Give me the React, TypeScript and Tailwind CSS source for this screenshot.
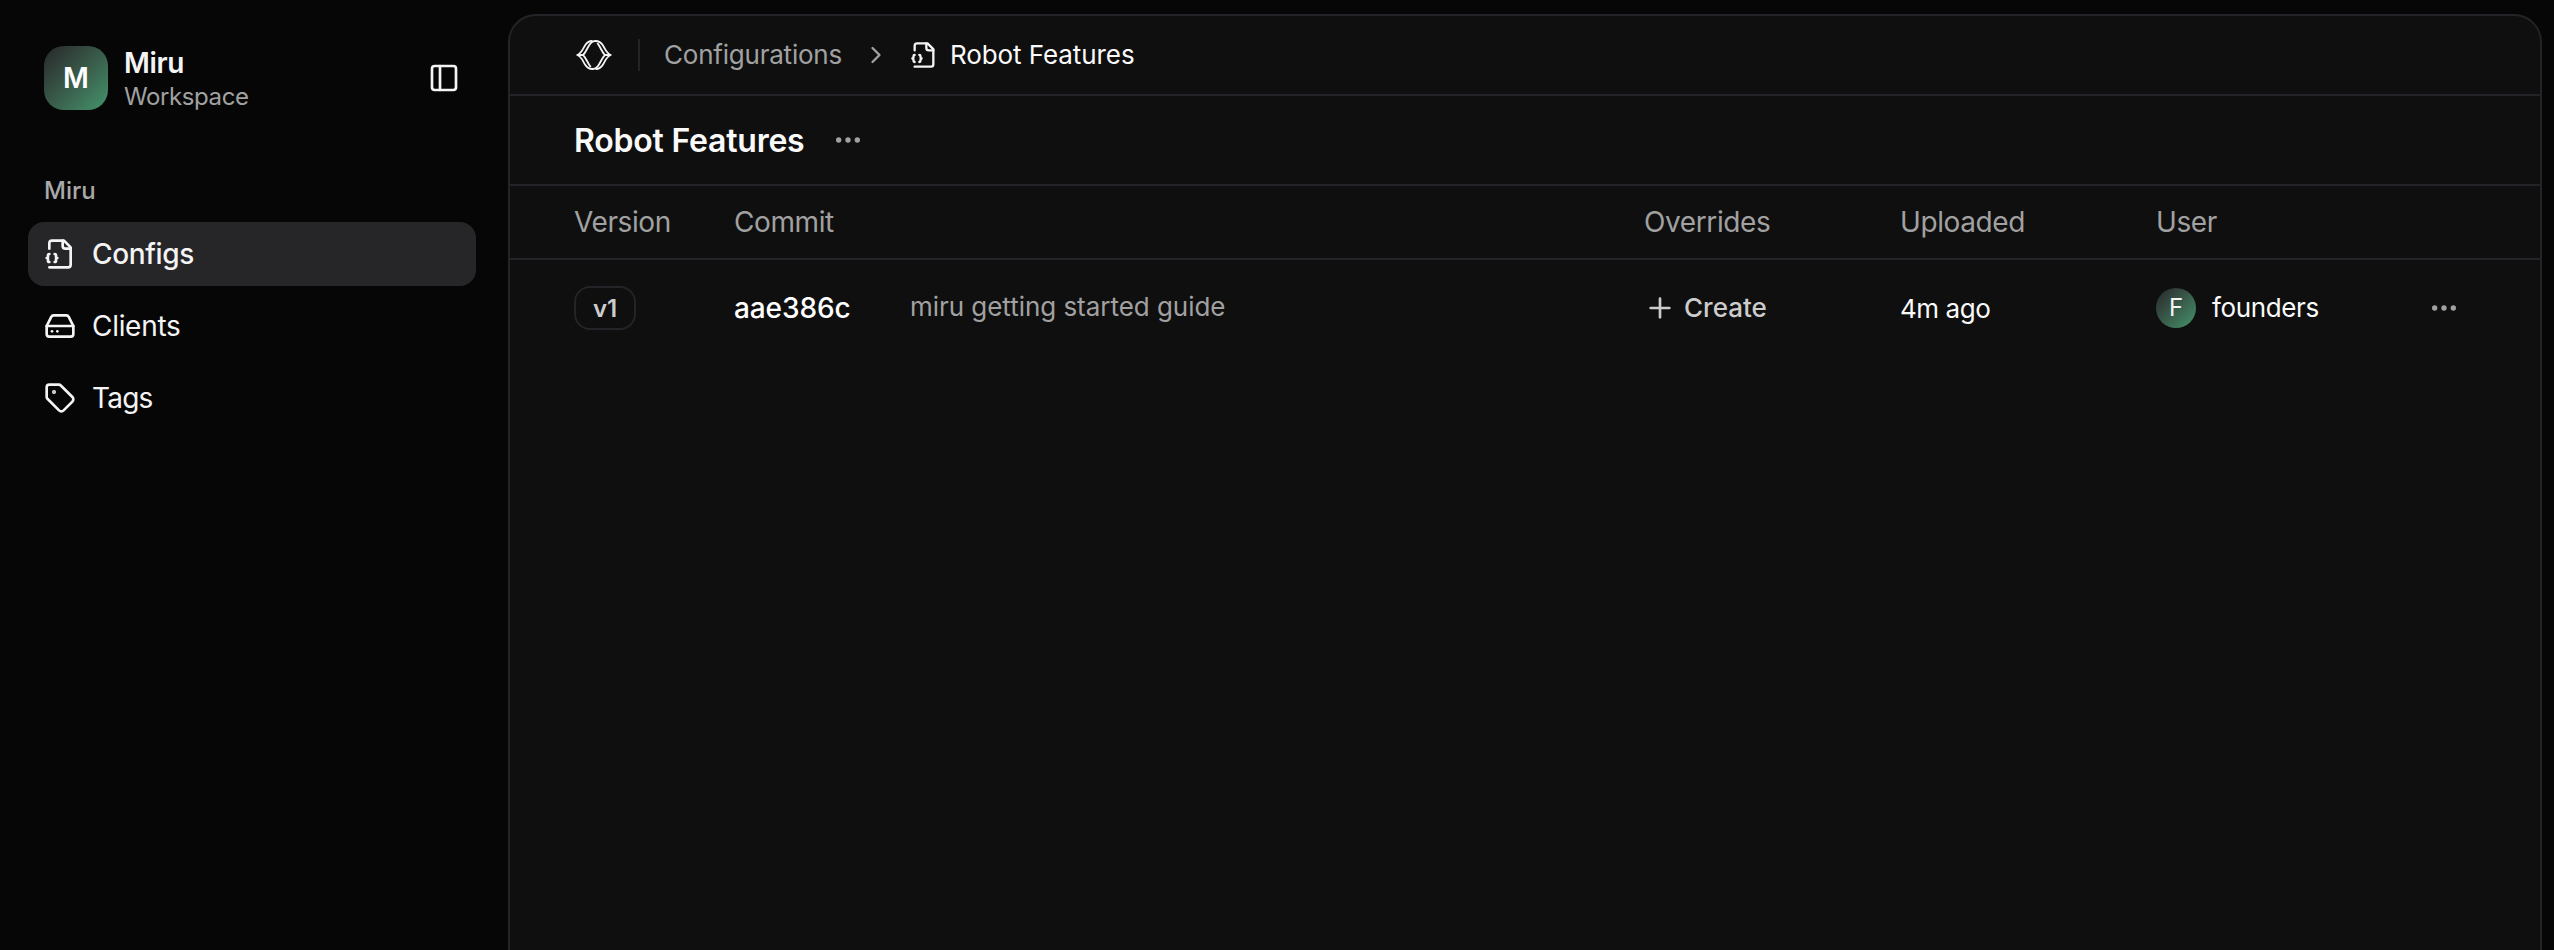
import type { ReactNode } from "react";
import { ChevronRight, Ellipsis, HardDrive, PanelLeft, Plus, Tag } from "lucide-react";

function ConfigIcon({ className }: { className?: string }) {
  return (
    <svg
      viewBox="0 0 24 24"
      fill="none"
      stroke="currentColor"
      strokeWidth="2"
      strokeLinecap="round"
      strokeLinejoin="round"
      className={className}
    >
      <path d="M4 22h14a2 2 0 0 0 2-2V7l-5-5H6a2 2 0 0 0-2 2v4" />
      <path d="M14 2v4a2 2 0 0 0 2 2h4" />
      <path d="M4 12a1 1 0 0 0-1 1v1a1 1 0 0 1-1 1 1 1 0 0 1 1 1v1a1 1 0 0 0 1 1" />
      <path d="M8 18a1 1 0 0 0 1-1v-1a1 1 0 0 1 1-1 1 1 0 0 1-1-1v-1a1 1 0 0 0-1-1" />
    </svg>
  );
}

function Logo() {
  return (
    <svg
      viewBox="0 0 36 30"
      fill="none"
      stroke="currentColor"
      strokeWidth="1.8"
      strokeLinejoin="round"
      className="h-[30px] w-9"
    >
      <path d="M16.500 1C13 .8 11 2.200 9 5.500C6.500 9.500 5.500 13.500 1.200 15C5.500 16.500 6.500 20.500 9 24.500C11 27.800 13 29.200 17 29C20 28.800 21.500 27 23 24.500C25.500 20.500 26.500 17 29 15C26.500 13 25.500 9.500 23 5.500L21.300 3" />
      <path d="M19.500 29C23 29.200 25 27.800 27 24.500C29.500 20.500 30.500 16.500 34.800 15C30.500 13.500 29.500 9.500 27 5.500C25 2.200 23 .8 19 1C16 1.200 14.500 3 13 5.500C10.500 9.500 9.500 13 7 15C9.500 17 10.500 20.500 13 24.500L14.700 27" />
      <path d="M1.200 15H7M29 15h5.800" />
    </svg>
  );
}

function NavItem({
  icon,
  label,
  active,
  tracking,
}: {
  icon: ReactNode;
  label: string;
  active?: boolean;
  tracking: string;
}) {
  return (
    <a
      className={
        active
          ? "flex h-16 items-center gap-4 rounded-2xl bg-[#262628] px-4 text-[28px] font-medium"
          : "flex h-16 items-center gap-4 rounded-2xl px-4 text-[28px]"
      }
    >
      {icon}
      <span className={tracking}>{label}</span>
    </a>
  );
}

const columns = "grid grid-cols-[160px_910px_256px_256px_1fr] items-center pl-16 pr-[80px]";

export default function App() {
  return (
    <div className="flex h-[950px] w-full overflow-hidden bg-[#060606] font-['Inter',sans-serif] text-[#f4f4f5]">
      <aside className="flex w-[508px] shrink-0 flex-col pr-8 pl-7">
        <div className="mt-[46px] flex h-16 items-center px-4">
          <div className="flex size-16 items-center justify-center rounded-[20px] bg-linear-to-br from-[#27272a] to-[#43956c] text-[28px] font-semibold text-white">
            M
          </div>
          <div className="ml-4 flex flex-col pt-[3px]">
            <span className="text-[28px] leading-[35px] font-semibold tracking-[-0.3px]">Miru</span>
            <span className="text-[24px] leading-8 tracking-[-0.4px] text-[#a1a1a1]">Workspace</span>
          </div>
          <PanelLeft className="ml-auto size-8" />
        </div>
        <div className="mt-[48px] flex h-16 items-center px-4 pt-0.5 text-[24px] font-medium text-[#a9a9aa]">Miru</div>
        <nav className="flex flex-col gap-2">
          <NavItem active icon={<ConfigIcon className="size-8" />} label="Configs" tracking="tracking-[-0.35px]" />
          <NavItem icon={<HardDrive className="size-8" />} label="Clients" tracking="tracking-[-0.3px]" />
          <NavItem icon={<Tag className="size-8" />} label="Tags" tracking="tracking-[-0.8px]" />
        </nav>
      </aside>

      <main className="mt-[14px] mr-3 flex h-[960px] grow flex-col rounded-t-[28px] border-2 border-[#242428] bg-[#0f0f0f]">
        <header className="flex h-20 shrink-0 items-center border-b-2 border-[#242428] pl-[66px] text-[26px] leading-[38px]">
          <Logo />
          <div className="ml-[26px] h-8 w-0.5 bg-[#242428]" />
          <span className="ml-6 tracking-[-0.22px] text-[#a1a1a1]">Configurations</span>
          <ChevronRight className="ml-5 size-7 text-[#a1a1a1]" />
          <ConfigIcon className="ml-5 size-7" />
          <span className="ml-3 tracking-[-0.08px] text-[#fafafa]">Robot Features</span>
        </header>
        <div className="flex h-[90px] shrink-0 items-center border-b-2 border-[#242428] pl-16">
          <h1 className="pt-0.5 text-[32px] font-semibold tracking-[-0.22px] text-[#fafafa]">Robot Features</h1>
          <Ellipsis className="ml-7 size-8 text-[#a1a1a1]" />
        </div>
        <div
          className={`${columns} h-[74px] shrink-0 border-b-2 border-[#242428] text-[28px] tracking-[-0.4px] text-[#a1a1a1]`}
        >
          <span>Version</span>
          <span>Commit</span>
          <span>Overrides</span>
          <span>Uploaded</span>
          <span>User</span>
        </div>
        <div className={`${columns} h-24 shrink-0 text-[26px] leading-[38px]`}>
          <div className="flex">
            <span className="flex h-11 items-center rounded-2xl border-2 border-[#242428] px-[17px] pt-0.5 text-[24px] leading-9 font-semibold text-[#cccccc]">
              v1
            </span>
          </div>
          <div className="flex items-center">
            <span className="w-[176px] text-[28px] leading-[42px] font-medium tracking-[-0.1px] text-white">
              aae386c
            </span>
            <span className="pb-0.5 tracking-[-0.04px] text-[#a1a1a1]">miru getting started guide</span>
          </div>
          <div className="flex items-center gap-2 font-medium text-[#cccccc]">
            <Plus className="size-8" />
            <span>Create</span>
          </div>
          <span className="pt-0.5 tracking-[-0.45px] text-[#fafafa]">4m ago</span>
          <div className="flex items-center">
            <span className="flex size-10 items-center justify-center rounded-full bg-linear-to-br from-[#27272a] to-[#43956c] text-[24px] leading-9">
              F
            </span>
            <span className="ml-4 tracking-[-0.38px] text-[#fafafa]">founders</span>
            <Ellipsis className="ml-auto size-8 text-[#a1a1a1]" />
          </div>
        </div>
      </main>
    </div>
  );
}
